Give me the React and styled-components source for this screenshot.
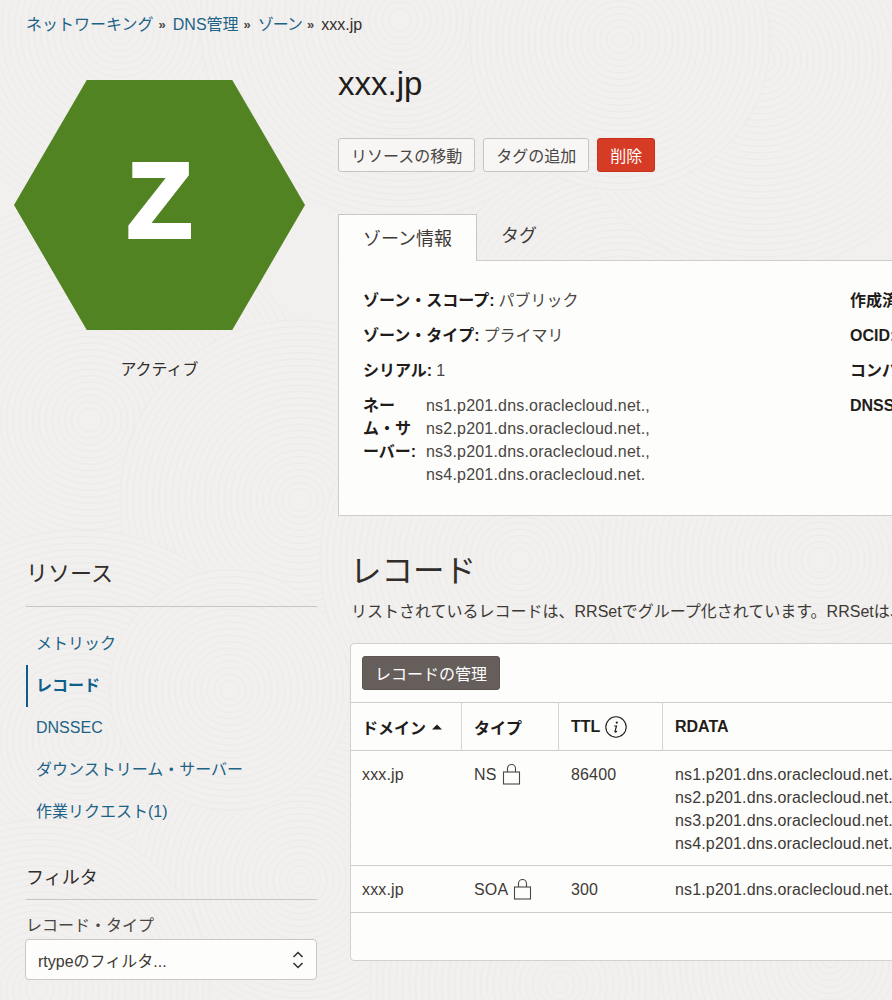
import React from "react";
import styled, { createGlobalStyle } from "styled-components";

const sans = `"Liberation Sans", "Noto Sans CJK JP", sans-serif`;

const Global = createGlobalStyle`
  html, body { margin: 0; padding: 0; background: #f1f0ee; }
  body { font-family: ${sans}; font-size: 16px; color: #312d2a; }
  * { box-sizing: border-box; }
`;

const Page = styled.div`
  position: relative;
  isolation: isolate;
  width: 892px;
  height: 1000px;
  overflow: hidden;
  padding: 13px 0 0;
  background-color: #f1f0ee;
`;
const TextureSvg = styled.svg`
  position: absolute;
  inset: 0;
  z-index: -1;
`;

const Crumbs = styled.nav`
  display: flex;
  align-items: center;
  height: 23px;
  padding-left: 26px;
  line-height: 23px;
`;
const Crumb = styled.a`
  color: #1d6287;
  letter-spacing: ${(p) => p.$ls || 0}px;
`;
const Sep = styled.span`
  margin: 0 7px 0 5px;
  font-size: 13px;
  font-weight: 700;
  color: #4a4642;
`;

const Top = styled.section`
  display: flex;
  margin-top: 29px;
`;
const Side = styled.div`
  flex: none;
  width: 338px;
  padding: 15px 0 0 14px;
`;
const Hexagon = styled.div`
  display: flex;
  align-items: center;
  justify-content: center;
  width: 291px;
  height: 250px;
  padding-bottom: 10px;
  background: #528322;
  clip-path: polygon(25% 0, 75% 0, 100% 50%, 75% 100%, 25% 100%, 0 50%);
  color: #fff;
  font-size: 106px;
  font-weight: 700;
  line-height: 1;
  -webkit-text-stroke: 4px #fff;
`;
const Status = styled.div`
  width: 291px;
  margin-top: 29px;
  text-align: center;
  line-height: 22px;
`;
const Main = styled.div`
  flex: none;
  width: 720px;
`;
const Title = styled.h1`
  margin: 0;
  font-size: 33px;
  font-weight: 400;
  line-height: 38px;
  color: #1f1c1a;
`;
const Actions = styled.div`
  display: flex;
  gap: 8px;
  margin-top: 35px;
`;
const Button = styled.button`
  height: 34px;
  padding: 0 12px;
  border: 1px solid ${(p) => (p.$danger ? "#c9301a" : "#c6c3c0")};
  border-radius: 3px;
  background: ${(p) => (p.$danger ? "#d63b25" : "#f7f6f5")};
  color: ${(p) => (p.$danger ? "#fff" : "#4a4642")};
  font: inherit;
  white-space: nowrap;
`;
const Tabs = styled.div`
  display: flex;
  margin: 42px 0 -1px;
`;
const Tab = styled.div`
  position: relative;
  z-index: 1;
  height: 47px;
  padding: 0 24px;
  font-size: 18px;
  line-height: ${(p) => (p.$active ? "48px" : "44px")};
  color: #3d3935;
  ${(p) => p.$active && `background:#fdfdfc;border:1px solid #c9c6c3;border-bottom:0;`}
`;
const Panel = styled.div`
  display: flex;
  height: 256px;
  padding: 24px 0 0 24px;
  border: 1px solid #cfccc9;
  border-right: 0;
  background: #fdfdfc;
`;
const InfoCol = styled.div`
  flex: none;
  width: ${(p) => p.$w}px;
`;
const InfoRow = styled.div`
  display: flex;
  height: 35px;
  line-height: 32px;
  color: #4a4642;
`;
const Key = styled.b`
  margin-right: 4px;
  color: #1f1c1a;
  white-space: nowrap;
`;
const NsRow = styled.div`
  display: flex;
  margin-top: 4px;
  line-height: 23px;
  color: #4a4642;
`;
const NsKey = styled.b`
  flex: none;
  width: 63px;
  color: #1f1c1a;
`;
const NsList = styled.div`
  letter-spacing: 0.2px;
`;

const Lower = styled.section`
  display: flex;
  margin-top: 35px;
`;
const Rail = styled.aside`
  flex: none;
  width: 350px;
  padding: 9px 33px 0 26px;
`;
const RailTitle = styled.h3`
  margin: 0;
  padding-bottom: ${(p) => p.$pb}px;
  border-bottom: 1px solid #c8c5c2;
  font-size: ${(p) => p.$size}px;
  font-weight: 400;
  line-height: 28px;
  color: #312d2a;
`;
const Menu = styled.ul`
  margin: 16px 0 0;
  padding: 0;
  list-style: none;
`;
const MenuItem = styled.li`
  height: 42px;
  padding-left: ${(p) => (p.$active ? 8 : 10)}px;
  line-height: 42px;
  border-left: ${(p) => (p.$active ? "2px solid #0d5a8c" : "0")};
  color: ${(p) => (p.$active ? "#0f5f8c" : "#1d6287")};
  font-weight: ${(p) => (p.$active ? 700 : 400)};
`;
const FilterBlock = styled.div`
  margin-top: 31px;
`;
const FieldLabel = styled.div`
  margin-top: 14px;
  line-height: 24px;
  color: #4a4642;
`;
const Select = styled.div`
  display: flex;
  align-items: center;
  justify-content: space-between;
  height: 41px;
  margin: 1px 0 0 -1px;
  padding: 0 12px;
  border: 1px solid #c9c6c3;
  border-radius: 4px;
  background: #fdfdfc;
  color: #3d3935;
`;
const Content = styled.div`
  flex: none;
  width: 760px;
`;
const SectionTitle = styled.h2`
  margin: 0;
  font-size: 31.5px;
  font-weight: 400;
  line-height: 40px;
  color: #312d2a;
`;
const Description = styled.p`
  margin: 10px 0 0 1px;
  line-height: 22px;
  white-space: nowrap;
  color: #3d3935;
`;
const Card = styled.div`
  height: 318px;
  margin-top: 20px;
  border: 1px solid #d3d0cd;
  border-radius: 4px 0 0 4px;
  background: #fdfdfc;
`;
const Toolbar = styled.div`
  height: 59px;
  padding: 12px 11px;
  border-bottom: 1px solid #cfccc9;
`;
const DarkButton = styled.button`
  height: 34px;
  padding: 0 12px;
  border: 1px solid #5c5551;
  border-radius: 3px;
  background: #655e5a;
  color: #fff;
  font: inherit;
`;
const Table = styled.div`
  display: grid;
  grid-template-columns: 110px 97px 104px 1fr;
`;
const Head = styled.div`
  display: flex;
  align-items: center;
  gap: 5px;
  height: 48px;
  padding: 0 ${(p) => (p.$first ? 11 : 12)}px;
  border-bottom: 1px solid #cfccc9;
  border-left: ${(p) => (p.$first ? "0" : "1px solid #d6d3d0")};
  font-weight: 700;
  color: #1f1c1a;
`;
const Cell = styled.div`
  display: ${(p) => (p.$flex ? "flex" : "block")};
  gap: 5px;
  height: ${(p) => p.$h}px;
  padding: 12px ${(p) => (p.$first ? 11 : 13)}px 0;
  border-bottom: 1px solid #cfccc9;
  line-height: 23px;
  letter-spacing: 0.15px;
  color: #3d3935;
  white-space: nowrap;
`;

const clusters = [
  [620, 330, 230], [120, 30, 190], [400, 20, 200], [760, 60, 210], [90, 420, 220],
  [300, 500, 180], [520, 560, 200], [820, 560, 220], [80, 740, 210], [300, 880, 170],
  [40, 990, 170], [560, 985, 190], [830, 960, 170], [620, 40, 150], [230, 690, 120],
];
const Texture = () => (
  <TextureSvg width="892" height="1000" viewBox="0 0 892 1000" aria-hidden="true">
    {clusters.map(([x, y, r]) => (
      <g key={`${x}-${y}`}>
        <circle cx={x} cy={y} r={r} fill="#f1f0ee" />
        {Array.from({ length: Math.floor(r / 6.5) }, (_, i) => (
          <circle key={i} cx={x} cy={y} r={r - i * 6.5} fill="none" stroke="#ecebe9" strokeWidth="1" />
        ))}
      </g>
    ))}
  </TextureSvg>
);

const LockIcon = () => (
  <svg width="20" height="22" viewBox="0 0 20 22" fill="none" stroke="#4a4642" strokeWidth="1.1">
    <rect x="1.5" y="9" width="16" height="12" />
    <path d="M5.5 9V5.5a4 4 0 0 1 8 0V9" />
  </svg>
);
const InfoIcon = () => (
  <svg width="22" height="22" viewBox="0 0 22 22">
    <circle cx="11" cy="11" r="10.2" fill="none" stroke="#1f1c1a" strokeWidth="1.1" />
    <circle cx="11.8" cy="6.6" r="1.1" fill="#1f1c1a" />
    <path d="M9.2 10h2.3l-1.5 5.4c-.2.8.5 1 1.8-.4" fill="none" stroke="#1f1c1a" strokeWidth="1.2" />
  </svg>
);
const SortIcon = () => (
  <svg width="12" height="6" viewBox="0 0 12 6">
    <path d="M6 0.5 11 5.5H1z" fill="#1f1c1a" />
  </svg>
);
const Updown = () => (
  <svg width="12" height="20" viewBox="0 0 12 20" fill="none" stroke="#312d2a" strokeWidth="1.5">
    <path d="M1.5 7 6 2.5 10.5 7M1.5 13 6 17.5 10.5 13" />
  </svg>
);

const ns = ["ns1", "ns2", "ns3", "ns4"].map((n) => `${n}.p201.dns.oraclecloud.net.`);

export default function App() {
  return (
    <Page>
      <Global />
      <Texture />
      <Crumbs>
        <Crumb>ネットワーキング</Crumb>
        <Sep>»</Sep>
        <Crumb>DNS管理</Crumb>
        <Sep>»</Sep>
        <Crumb $ls={-1}>ゾーン</Crumb>
        <Sep>»</Sep>
        <span>xxx.jp</span>
      </Crumbs>
      <Top>
        <Side>
          <Hexagon>Z</Hexagon>
          <Status>アクティブ</Status>
        </Side>
        <Main>
          <Title>xxx.jp</Title>
          <Actions>
            <Button>リソースの移動</Button>
            <Button>タグの追加</Button>
            <Button $danger>削除</Button>
          </Actions>
          <Tabs>
            <Tab $active>ゾーン情報</Tab>
            <Tab>タグ</Tab>
          </Tabs>
          <Panel>
            <InfoCol $w={487}>
              <InfoRow><Key>ゾーン・スコープ:</Key>パブリック</InfoRow>
              <InfoRow><Key>ゾーン・タイプ:</Key>プライマリ</InfoRow>
              <InfoRow><Key>シリアル:</Key>1</InfoRow>
              <NsRow>
                <NsKey>ネー<br />ム・サ<br />ーバー:</NsKey>
                <NsList>
                  {ns.map((n, i) => (
                    <div key={n}>{i < 3 ? n + "," : n}</div>
                  ))}
                </NsList>
              </NsRow>
            </InfoCol>
            <InfoCol $w={200}>
              <InfoRow><Key>作成済み:</Key></InfoRow>
              <InfoRow><Key>OCID:</Key></InfoRow>
              <InfoRow><Key>コンパートメント:</Key></InfoRow>
              <InfoRow><Key>DNSSEC:</Key></InfoRow>
            </InfoCol>
          </Panel>
        </Main>
      </Top>
      <Lower>
        <Rail>
          <RailTitle $size={22} $pb={18}>リソース</RailTitle>
          <Menu>
            <MenuItem>メトリック</MenuItem>
            <MenuItem $active>レコード</MenuItem>
            <MenuItem>DNSSEC</MenuItem>
            <MenuItem>ダウンストリーム・サーバー</MenuItem>
            <MenuItem>作業リクエスト(1)</MenuItem>
          </Menu>
          <FilterBlock>
            <RailTitle $size={18} $pb={7}>フィルタ</RailTitle>
            <FieldLabel>レコード・タイプ</FieldLabel>
            <Select>
              <span>rtypeのフィルタ...</span>
              <Updown />
            </Select>
          </FilterBlock>
        </Rail>
        <Content>
          <SectionTitle>レコード</SectionTitle>
          <Description>リストされているレコードは、RRSetでグループ化されています。RRSetは、同じ名前とタイプを持つレコードの集合です。</Description>
          <Card>
            <Toolbar>
              <DarkButton>レコードの管理</DarkButton>
            </Toolbar>
            <Table>
              <Head $first>ドメイン <SortIcon /></Head>
              <Head>タイプ</Head>
              <Head>TTL <InfoIcon /></Head>
              <Head>RDATA</Head>
              <Cell $first $h={115}>xxx.jp</Cell>
              <Cell $flex $h={115}>NS <LockIcon /></Cell>
              <Cell $h={115}>86400</Cell>
              <Cell $h={115}>{ns.map((n) => <div key={n}>{n}</div>)}</Cell>
              <Cell $first $h={47}>xxx.jp</Cell>
              <Cell $flex $h={47}>SOA <LockIcon /></Cell>
              <Cell $h={47}>300</Cell>
              <Cell $h={47}>{ns[0]}</Cell>
            </Table>
          </Card>
        </Content>
      </Lower>
    </Page>
  );
}
